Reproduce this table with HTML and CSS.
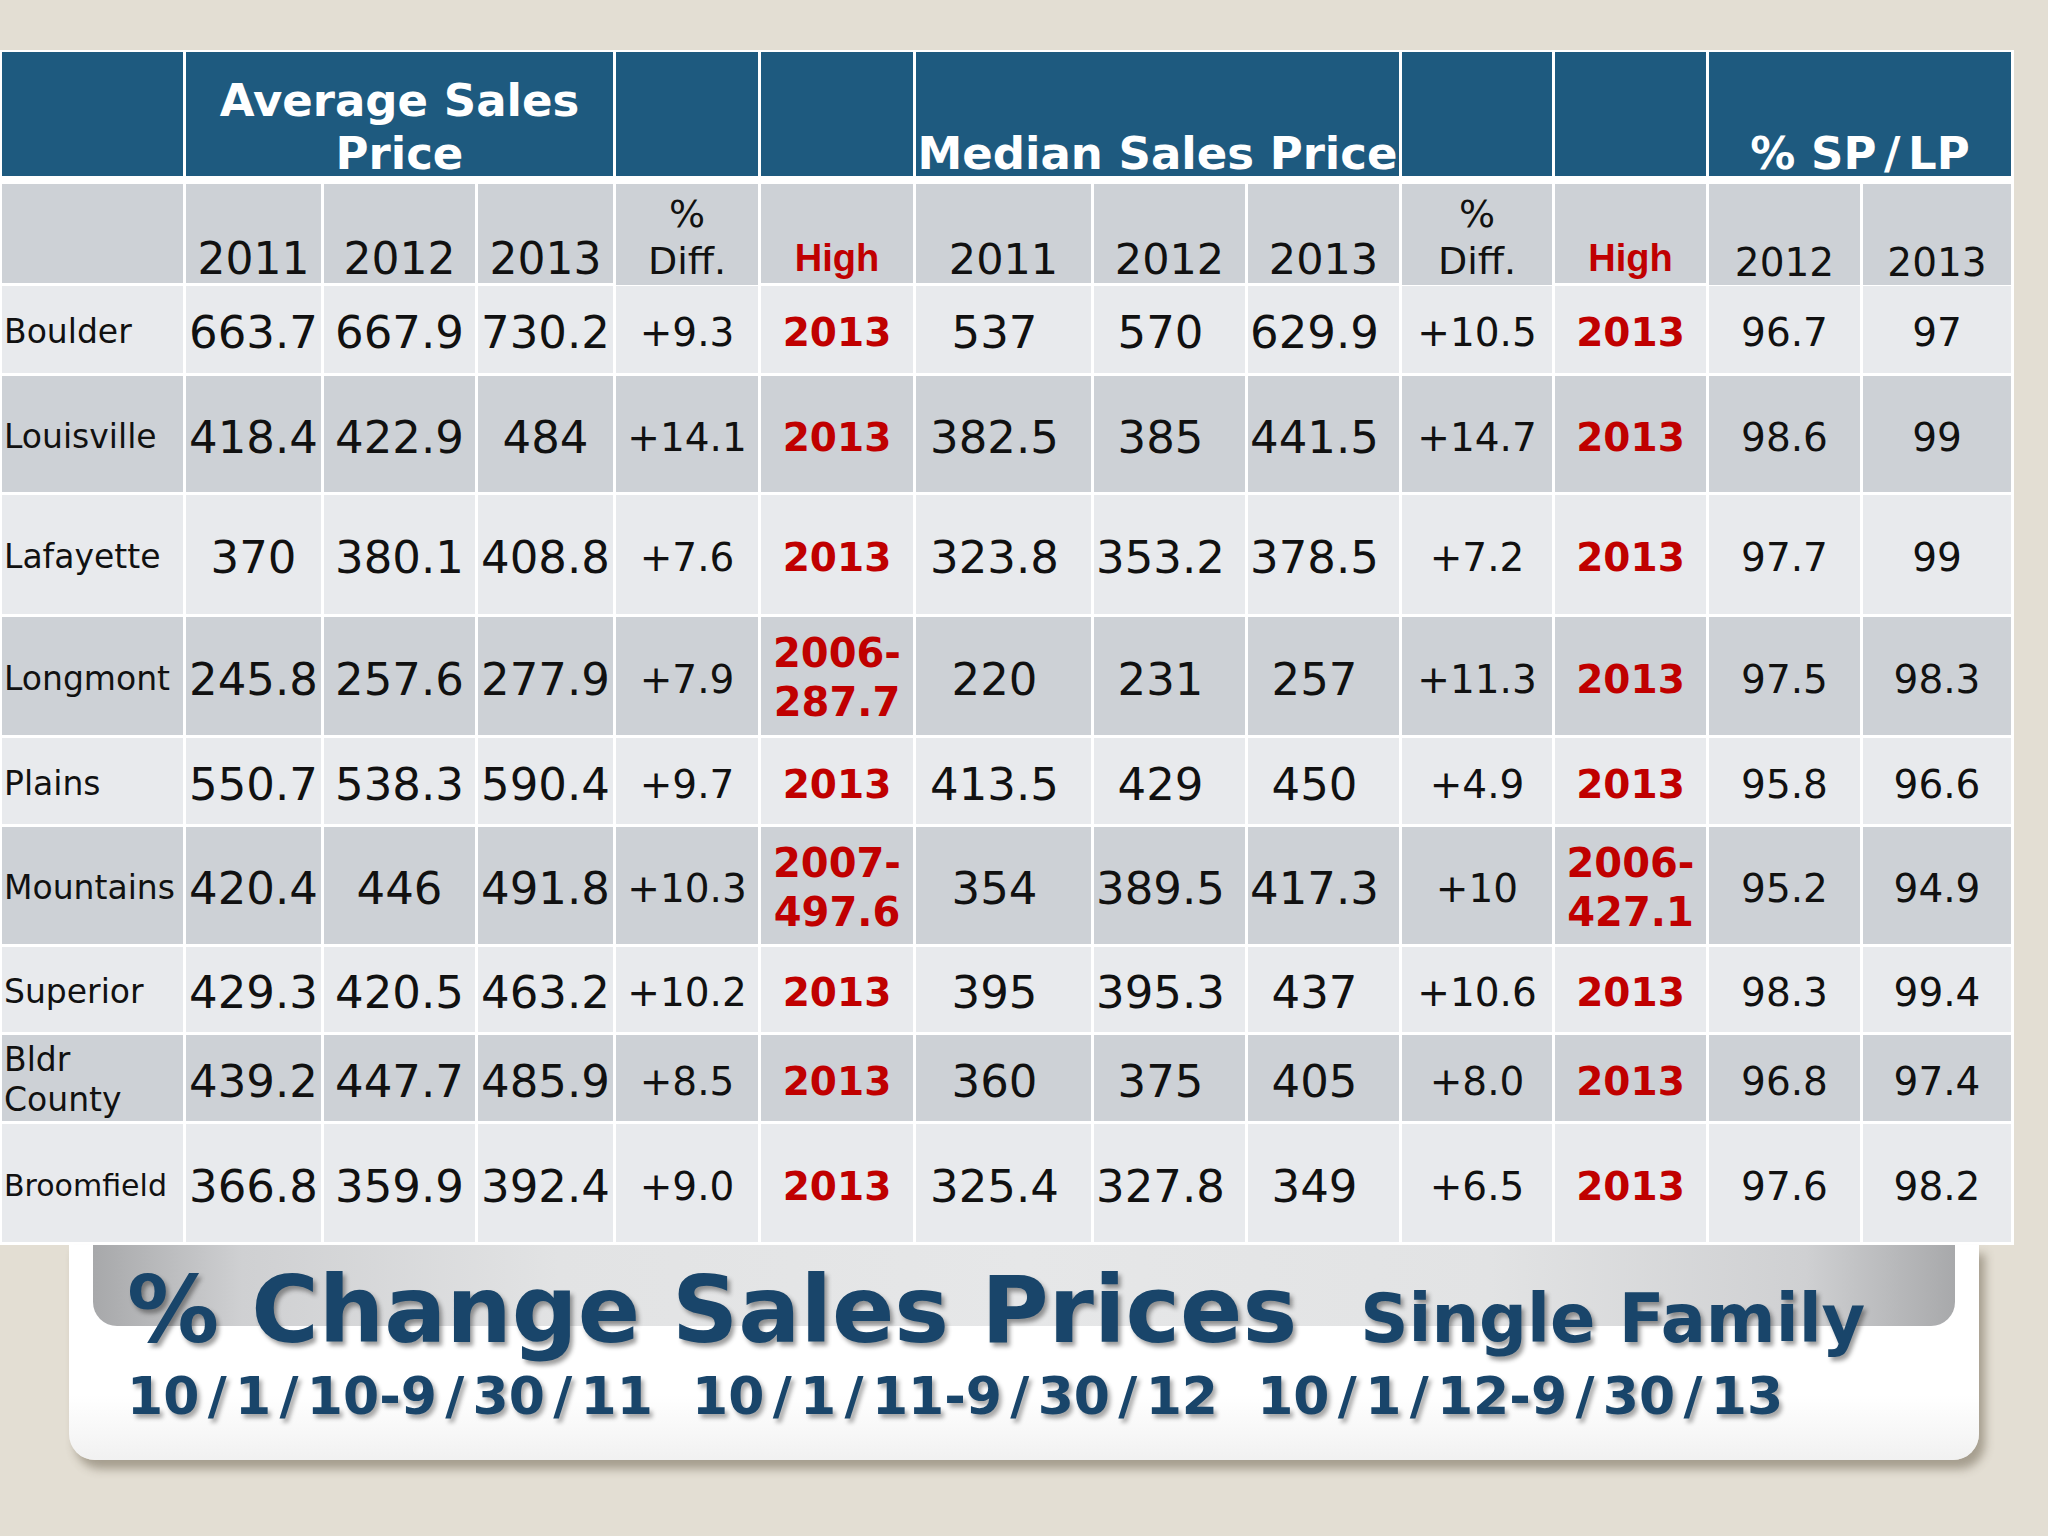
FILE: index.html
```html
<!DOCTYPE html>
<html lang="en">
<head>
<meta charset="utf-8">
<title>% Change Sales Prices Single Family</title>
<link rel="stylesheet" href="styles.css">
</head>
<body>
<div class="table">
  <div class="row head">
    <div></div>
    <div class="span3"><span class="ht">Average Sales<br>Price</span></div>
    <div></div>
    <div></div>
    <div class="span3"><span class="ht nw">Median Sales Price</span></div>
    <div></div>
    <div></div>
    <div class="span2"><span class="ht">% SP<span class="sl">/</span>LP</span></div>
  </div>
  <div class="row sub dk">
    <div></div>
    <div class="yr">2011</div>
    <div class="yr">2012</div>
    <div class="yr">2013</div>
    <div class="pd">%<br>Diff.</div>
    <div class="hh">High</div>
    <div class="yr m">2011</div>
    <div class="yr m">2012</div>
    <div class="yr m">2013</div>
    <div class="pd">%<br>Diff.</div>
    <div class="hh">High</div>
    <div class="yr s">2012</div>
    <div class="yr s">2013</div>
  </div>
  <div class="row lt">
    <div class="nm">Boulder</div>
    <div class="v">663.7</div><div class="v">667.9</div><div class="v">730.2</div>
    <div class="d">+9.3</div><div class="hi">2013</div>
    <div class="v md">537</div><div class="v md">570</div><div class="v md">629.9</div>
    <div class="d">+10.5</div><div class="hi">2013</div>
    <div class="d">96.7</div><div class="d">97</div>
  </div>
  <div class="row dk">
    <div class="nm">Louisville</div>
    <div class="v">418.4</div><div class="v">422.9</div><div class="v">484</div>
    <div class="d">+14.1</div><div class="hi">2013</div>
    <div class="v md">382.5</div><div class="v md">385</div><div class="v md">441.5</div>
    <div class="d">+14.7</div><div class="hi">2013</div>
    <div class="d">98.6</div><div class="d">99</div>
  </div>
  <div class="row lt">
    <div class="nm">Lafayette</div>
    <div class="v">370</div><div class="v">380.1</div><div class="v">408.8</div>
    <div class="d">+7.6</div><div class="hi">2013</div>
    <div class="v md">323.8</div><div class="v md">353.2</div><div class="v md">378.5</div>
    <div class="d">+7.2</div><div class="hi">2013</div>
    <div class="d">97.7</div><div class="d">99</div>
  </div>
  <div class="row dk">
    <div class="nm">Longmont</div>
    <div class="v">245.8</div><div class="v">257.6</div><div class="v">277.9</div>
    <div class="d">+7.9</div><div class="hi two">2006-<br>287.7</div>
    <div class="v md">220</div><div class="v md">231</div><div class="v md">257</div>
    <div class="d">+11.3</div><div class="hi">2013</div>
    <div class="d">97.5</div><div class="d">98.3</div>
  </div>
  <div class="row lt">
    <div class="nm">Plains</div>
    <div class="v">550.7</div><div class="v">538.3</div><div class="v">590.4</div>
    <div class="d">+9.7</div><div class="hi">2013</div>
    <div class="v md">413.5</div><div class="v md">429</div><div class="v md">450</div>
    <div class="d">+4.9</div><div class="hi">2013</div>
    <div class="d">95.8</div><div class="d">96.6</div>
  </div>
  <div class="row dk">
    <div class="nm">Mountains</div>
    <div class="v">420.4</div><div class="v">446</div><div class="v">491.8</div>
    <div class="d">+10.3</div><div class="hi two">2007-<br>497.6</div>
    <div class="v md">354</div><div class="v md">389.5</div><div class="v md">417.3</div>
    <div class="d">+10</div><div class="hi two">2006-<br>427.1</div>
    <div class="d">95.2</div><div class="d">94.9</div>
  </div>
  <div class="row lt">
    <div class="nm">Superior</div>
    <div class="v">429.3</div><div class="v">420.5</div><div class="v">463.2</div>
    <div class="d">+10.2</div><div class="hi">2013</div>
    <div class="v md">395</div><div class="v md">395.3</div><div class="v md">437</div>
    <div class="d">+10.6</div><div class="hi">2013</div>
    <div class="d">98.3</div><div class="d">99.4</div>
  </div>
  <div class="row dk">
    <div class="nm nm2">Bldr<br>County</div>
    <div class="v">439.2</div><div class="v">447.7</div><div class="v">485.9</div>
    <div class="d">+8.5</div><div class="hi">2013</div>
    <div class="v md">360</div><div class="v md">375</div><div class="v md">405</div>
    <div class="d">+8.0</div><div class="hi">2013</div>
    <div class="d">96.8</div><div class="d">97.4</div>
  </div>
  <div class="row lt">
    <div class="nm sm">Broomfield</div>
    <div class="v">366.8</div><div class="v">359.9</div><div class="v">392.4</div>
    <div class="d">+9.0</div><div class="hi">2013</div>
    <div class="v md">325.4</div><div class="v md">327.8</div><div class="v md">349</div>
    <div class="d">+6.5</div><div class="hi">2013</div>
    <div class="d">97.6</div><div class="d">98.2</div>
  </div>
</div>

<div class="card">
  <div class="title">% Change Sales Prices <span class="subt">Single Family</span></div>
  <div class="dates"><span class="grp">10<span class="sl">/</span>1<span class="sl">/</span>10-9<span class="sl">/</span>30<span class="sl">/</span>11</span> <span class="grp gap">10<span class="sl">/</span>1<span class="sl">/</span>11-9<span class="sl">/</span>30<span class="sl">/</span>12</span> <span class="grp gap">10<span class="sl">/</span>1<span class="sl">/</span>12-9<span class="sl">/</span>30<span class="sl">/</span>13</span></div>
</div>
</body>
</html>
```

FILE: styles.css
```css
html, body {
  margin: 0;
  padding: 0;
}
body {
  width: 2048px;
  height: 1536px;
  background: #e3ded3;
  font-family: "DejaVu Sans", Verdana, sans-serif;
  color: #111;
  overflow: hidden;
}

.table {
  margin-top: 50px;
  width: max-content;
  background: #ffffff;
  padding: 2px 3px 3px 2px;
  display: grid;
  grid-template-columns: 181px 135px 151px 135px 142px 152px 175px 151px 151px 150px 151px 151px 148px;
  grid-template-rows: 129px 99px 87px 116px 119px 118px 86px 117px 85px 86px 118px;
  gap: 3px;
}

.row {
  display: contents;
}
.row > div {
  display: flex;
  align-items: center;
  justify-content: center;
  text-align: center;
  white-space: nowrap;
}
.dk > div { background: #cdd1d6; }
.lt > div { background: #e8eaed; }

/* header */
.head > div {
  background: #1e5a7f;
  margin-bottom: 5px;
  align-items: flex-end;
  color: #fff;
  font-weight: bold;
  font-size: 45px;
  line-height: 53px;
}
.span3 { grid-column: span 3; }
.span2 { grid-column: span 2; }
.ht {
  display: block;
  margin-bottom: -4px;
}
.sl {
  margin: 0 0.17em;
}

/* sub header */
.sub > div {
  align-items: flex-end;
}
.yr {
  font-size: 44px;
  line-height: 1.1;
}
.yr.m { font-size: 43px; }
.yr.s {
  font-size: 39px;
  margin-bottom: -2px;
}
.pd {
  font-size: 38px;
  line-height: 47px;
  margin-bottom: -2px;
}
.hh {
  font-family: "Liberation Sans", Arial, sans-serif;
  font-weight: bold;
  font-size: 38px;
  line-height: 1.1;
  color: #c00000;
  padding-bottom: 3px;
  box-sizing: border-box;
}

/* data */
.row > .nm {
  justify-content: flex-start;
  text-align: left;
  padding-left: 2px;
  padding-top: 4px;
  font-size: 33px;
  box-sizing: border-box;
}
.row > .nm2 {
  line-height: 40px;
  white-space: normal;
}
.row > .sm { font-size: 30px; }
.v {
  font-size: 45px;
  padding-top: 6px;
  box-sizing: border-box;
}
.v.md {
  padding-right: 18px;
}
.d {
  font-size: 39px;
  padding-top: 6px;
  box-sizing: border-box;
}
.hi {
  font-size: 39px;
  font-weight: bold;
  color: #c00000;
  padding-top: 6px;
  box-sizing: border-box;
}
.hi.two {
  font-size: 40px;
  line-height: 49px;
  padding-top: 4px;
}

/* banner card */
.card {
  position: relative;
  z-index: 0;
  margin-left: 69px;
  width: 1910px;
  height: 215px;
  box-sizing: border-box;
  padding: 20px 0 0 58px;
  border-radius: 0 0 26px 26px;
  background: linear-gradient(to bottom, #ffffff 0%, #ffffff 70%, #f1f1f1 100%);
  box-shadow: 6px 9px 10px rgba(90, 80, 60, 0.45);
  color: #19456a;
  font-weight: bold;
}
.card::before {
  content: "";
  position: absolute;
  z-index: -1;
  left: 24px;
  top: 0;
  width: 1862px;
  height: 81px;
  border-radius: 0 0 24px 24px;
  background: linear-gradient(to right, #a7a8aa 0%, #cfd0d2 8%, #e2e3e4 25%, #e6e7e8 50%, #e2e3e4 75%, #cfd0d2 92%, #a8a9ab 100%);
}
.title {
  font-size: 92px;
  line-height: 92px;
  white-space: nowrap;
  text-shadow: 3px 4px 4px rgba(40, 40, 40, 0.45);
}
.subt {
  font-size: 67px;
  margin-left: 31px;
}
.dates {
  margin-top: 5px;
  font-size: 52px;
  line-height: 52px;
  white-space: nowrap;
  text-shadow: 3px 4px 4px rgba(40, 40, 40, 0.4);
}
.dates .gap {
  margin-left: 21px;
}
.dates .sl {
  margin: 0 0.16em;
}
```
